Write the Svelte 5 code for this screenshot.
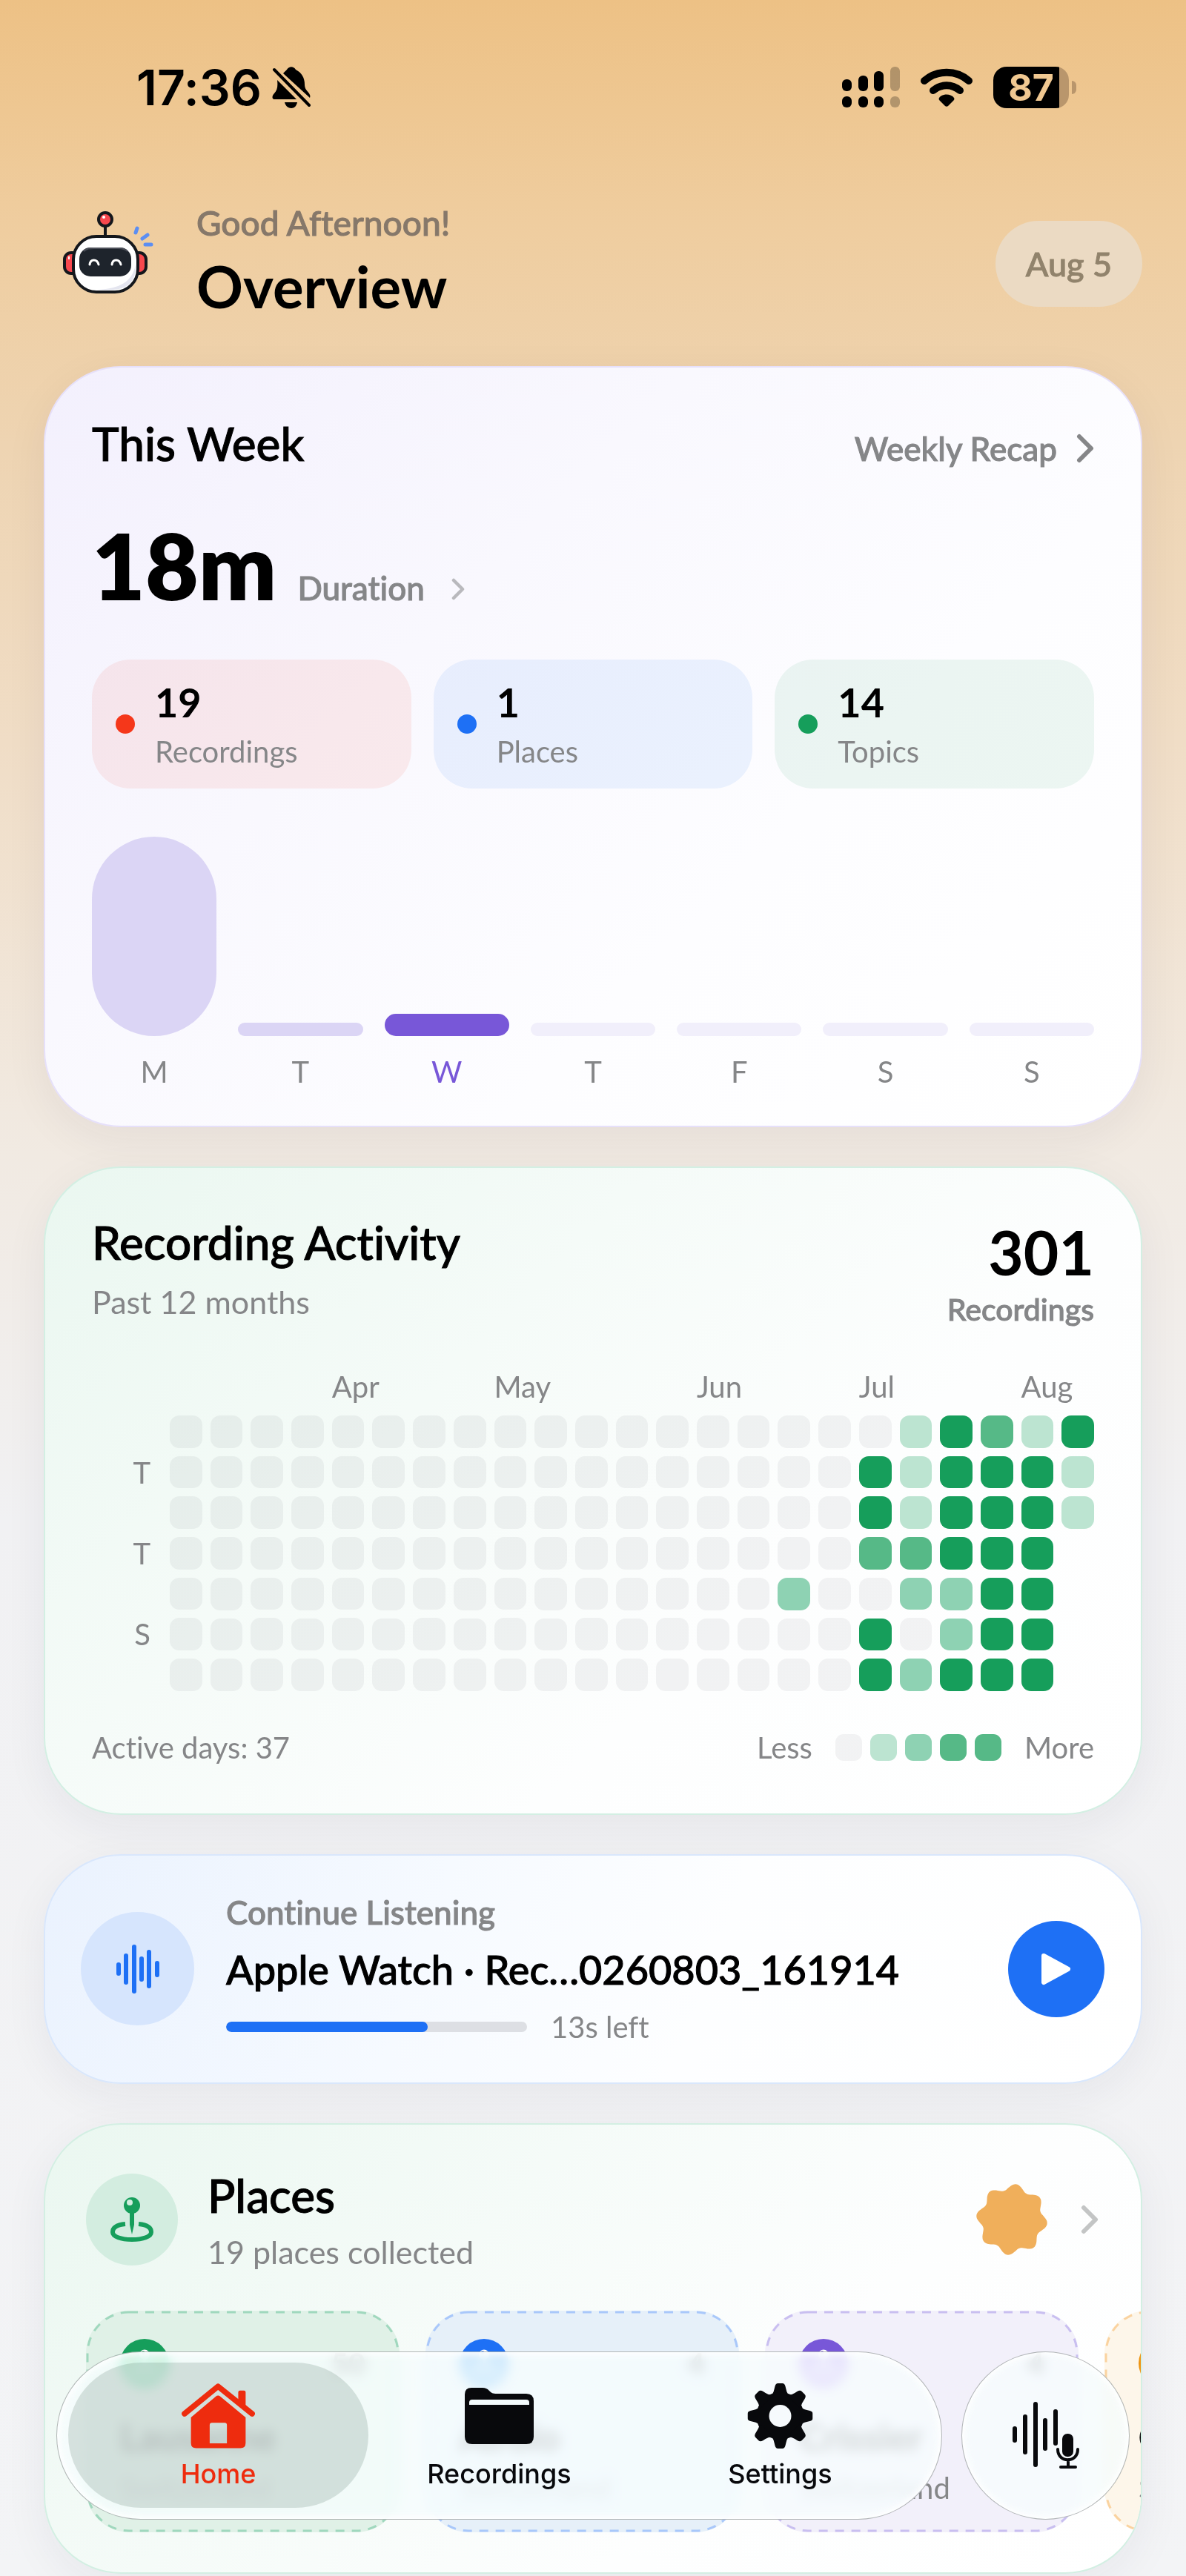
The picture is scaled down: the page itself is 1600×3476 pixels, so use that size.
<script>
  const stats = [
    { value: '19', label: 'Recordings', tone: 'red' },
    { value: '1', label: 'Places', tone: 'blue' },
    { value: '14', label: 'Topics', tone: 'green' },
  ];

  const week = [
    { day: 'M', height: 269, kind: 'past' },
    { day: 'T', height: 18, kind: 'past' },
    { day: 'W', height: 30, kind: 'today' },
    { day: 'T', height: 18, kind: 'empty' },
    { day: 'F', height: 18, kind: 'empty' },
    { day: 'S', height: 18, kind: 'empty' },
    { day: 'S', height: 18, kind: 'empty' },
  ];

  // One string per week column, one digit per day; a dot is a day still to come.
  const quiet = '0000000';
  const weeks = [
    ...Array(15).fill(quiet),
    '0000200',
    quiet,
    '0443044',
    '1113202',
    '4444224',
    '3444444',
    '1444444',
    '411....',
  ];

  const months = [
    { name: 'Apr', column: 5 },
    { name: 'May', column: 9 },
    { name: 'Jun', column: 14 },
    { name: 'Jul', column: 18 },
    { name: 'Aug', column: 22 },
  ];
  const weekdays = ['', 'T', '', 'T', '', 'S', ''];

  const places = [
    { name: 'Lausanne', country: 'Switzerland', count: '50', tone: 'green' },
    { name: 'Airolo', country: 'Switzerland', count: '4', tone: 'blue' },
    { name: 'Crissier', country: 'Switzerland', count: '4', tone: 'purple' },
    { name: 'Como', country: 'Switzerland', count: '2', tone: 'orange' },
  ];

  const teeth = [0, 45, 90, 135, 180, 225, 270, 315];

  const badge =
    'M' +
    Array.from({ length: 180 }, (_, i) => {
      const a = (i * Math.PI) / 90;
      const r = 44 + 4 * Math.cos(8 * (a - 0.12));
      return `${(49 + r * Math.sin(a)).toFixed(1)} ${(49 - r * Math.cos(a)).toFixed(1)}`;
    }).join('L') +
    'Z';
</script>

{#snippet pin()}
  <svg class="pin" viewBox="0 0 58 62" aria-hidden="true">
    <path d="M20 37C9 38 3 42 3 48c0 6 11 10 26 10s26-4 26-10c0-6-6-10-17-11" fill="none" stroke="currentColor" stroke-width="6" />
    <path d="M26 18h6v20l-3 13-3-13z" fill="currentColor" />
    <circle cx="29" cy="12" r="11" fill="currentColor" />
    <circle class="pin-shine" cx="26" cy="8" r="4" />
  </svg>
{/snippet}

{#snippet chevron(size)}
  <svg class="chevron {size}" viewBox="0 0 24 40" aria-hidden="true">
    <path d="M4 4l16 16L4 36" fill="none" stroke="currentColor" stroke-width="6" stroke-linecap="round" stroke-linejoin="round" />
  </svg>
{/snippet}

<div class="screen">
  <div class="status">
    <div class="clock">
      <span>17:36</span>
      <svg class="bell" viewBox="0 0 52 56" aria-hidden="true">
        <path d="M7 18L33 44H4c-5 0-4-5-1-8 4-4 5-9 4-18z" />
        <path d="M15 9C18 6 19 5 20 4c3-5 9-5 12 0 8 4 12 11 12 20 0 6 3 8 6 12 1 2 2 3 1 6z" />
        <path d="M17 48h17c-1 5-4 8-8 8s-8-3-9-8z" />
        <path d="M3 4l47 48" stroke="#000" stroke-width="4" stroke-linecap="round" />
      </svg>
    </div>
    <div class="radios">
      <svg class="signal" viewBox="0 0 78 56" aria-hidden="true">
        <rect x="0" y="17" width="13" height="16" rx="6" /><rect x="22" y="12" width="13" height="21" rx="6" />
        <rect x="43" y="6" width="13" height="27" rx="6" /><rect class="dim" x="65" y="0" width="13" height="33" rx="6" />
        <rect x="0" y="40" width="13" height="15" rx="6" /><rect x="22" y="40" width="13" height="15" rx="6" />
        <rect x="43" y="40" width="13" height="15" rx="6" /><rect class="dim" x="65" y="40" width="13" height="15" rx="6" />
      </svg>
      <svg class="wifi" viewBox="0 0 70 52" aria-hidden="true">
        <path d="M5 17C22 2 48 2 65 17M17 30c11-9 25-9 36 0" fill="none" stroke="#000" stroke-width="10" stroke-linecap="round" />
        <path d="M25 40c4-6 16-6 20 0 1 2 0 3-1 4l-7 7c-1 1-3 1-4 0l-7-7c-1-1-2-2-1-4z" />
      </svg>
      <div class="battery"><span>87</span></div>
      <i class="battery-tip"></i>
    </div>
  </div>

  <header>
    <svg class="robot" viewBox="15 12 152 150" aria-hidden="true">
      <g stroke="#14171c" stroke-width="4">
        <rect x="17" y="72" width="20" height="28" rx="9" fill="#f8484e" />
        <rect x="107" y="72" width="20" height="28" rx="9" fill="#f8484e" />
        <path d="M72 36v16" />
        <circle cx="72" cy="27" r="9" fill="#f8484e" />
        <rect x="29" y="50" width="87" height="75" rx="31" fill="#fff" />
      </g>
      <path d="M113 88c1 24-12 34-34 34H62c30-2 46-10 51-34z" fill="#e4e5ef" />
      <rect x="37" y="65" width="70" height="39" rx="15" fill="#1e242c" />
      <path d="M43 70c4-4 8-4 14-4h32c6 0 10 1 13 4" fill="none" stroke="#4b4e58" stroke-width="2" />
      <path d="M51 88c1-8 10-8 12 0M81 88c1-8 10-8 12 0" fill="none" stroke="#fff" stroke-width="3" stroke-linecap="round" />
      <circle cx="70" cy="24" r="2" fill="#fff" /><path d="M23 77v4" stroke="#fff" stroke-width="2" />
      <path d="M115 39l-2 6M129 48l-7 5M134 61h-8" stroke="#5c8ef2" stroke-width="5" stroke-linecap="round" />
    </svg>
    <div class="greeting">
      <p>Good Afternoon!</p>
      <h1>Overview</h1>
    </div>
    <button class="date">Aug 5</button>
  </header>

  <main>
    <section class="card week">
      <div class="split">
        <h2>This Week</h2>
        <a class="recap" href="#recap">Weekly Recap {@render chevron('large')}</a>
      </div>
      <a class="duration" href="#duration"><strong>18m</strong><span>Duration</span>{@render chevron('small')}</a>
      <div class="stats">
        {#each stats as s}
          <div class="stat {s.tone}">
            <i></i>
            <div><b>{s.value}</b><span>{s.label}</span></div>
          </div>
        {/each}
      </div>
      <div class="bars">
        {#each week as d}
          <div class="day {d.kind}">
            <div class="track"><div class="bar" style:height="{d.height}px"></div></div>
            <span>{d.day}</span>
          </div>
        {/each}
      </div>
    </section>

    <section class="card activity">
      <div class="split top">
        <div>
          <h2>Recording Activity</h2>
          <p class="sub">Past 12 months</p>
        </div>
        <div class="total"><strong>301</strong><span>Recordings</span></div>
      </div>
      <div class="heat">
        <div class="months">
          {#each months as m}<span style:grid-column="{m.column} / span 2">{m.name}</span>{/each}
        </div>
        <div class="weekdays">
          {#each weekdays as w}<span>{w}</span>{/each}
        </div>
        <div class="cells">
          {#each weeks as w}
            <div class="column">
              {#each w as level}<i class={level === '.' ? 'none' : 'l' + level}></i>{/each}
            </div>
          {/each}
        </div>
      </div>
      <div class="split foot">
        <span>Active days: 37</span>
        <div class="legend">
          <span>Less</span>
          <div><i class="l0"></i><i class="l1"></i><i class="l2"></i><i class="l3"></i><i class="l3"></i></div>
          <span>More</span>
        </div>
      </div>
    </section>

    <section class="card listen">
      <div class="disc">
        <svg viewBox="0 0 60 66" aria-hidden="true">
          <path d="M4 27v12M14 15v36M25 3v60M35 19v28M45 10v46M56 25v16" stroke="currentColor" stroke-width="6" stroke-linecap="round" />
        </svg>
      </div>
      <div class="track-info">
        <p class="medium">Continue Listening</p>
        <h3>Apple Watch · Rec…0260803_161914</h3>
        <div class="progress-row">
          <div class="progress"><div class="fill" style:width="67%"></div></div>
          <span>13s left</span>
        </div>
      </div>
      <button class="play" aria-label="Play">
        <svg viewBox="0 0 40 44" aria-hidden="true"><path d="M3 4l33 18L3 40z" fill="#fff" stroke="#fff" stroke-width="6" stroke-linejoin="round" /></svg>
      </button>
    </section>

    <section class="card places">
      <a class="places-head" href="#places">
        <div class="disc">{@render pin()}</div>
        <div class="places-title">
          <h2>Places</h2>
          <p class="sub">19 places collected</p>
        </div>
        <svg class="badge" viewBox="0 0 98 98" aria-hidden="true"><path d={badge} fill="#f0af5b" /></svg>
        {@render chevron('large')}
      </a>
      <div class="tiles">
        {#each places as p}
          <article class="tile {p.tone}">
            <svg class="dashes" aria-hidden="true"><rect x="2" y="2" rx="56" /></svg>
            <div class="tile-top">
              <div class="dot">{@render pin()}</div>
              <b>{p.count}</b>
            </div>
            <h3>{p.name}</h3>
            <p>{p.country}</p>
          </article>
        {/each}
      </div>
    </section>
  </main>

  <div class="dock">
    <nav class="glass">
      <a class="active" href="#home">
        <svg viewBox="490 352 298 264" aria-hidden="true">
          <path d="M502 475L638 364L776 475" fill="none" stroke="currentColor" stroke-width="23" stroke-linecap="round" stroke-linejoin="round" />
          <path d="M720 430v-42q0-7 7-7h16q7 0 7 7v67z" fill="currentColor" />
          <path fill-rule="evenodd" d="M528 490L628 406q10-9 20 0L750 490V594q0 21-21 21H549q-21 0-21-21zM604 595h70v-74q0-9-9-9h-52q-9 0-9 9z" fill="currentColor" />
        </svg>
        <span>Home</span>
      </a>
      <a href="#recordings">
        <svg viewBox="0 -6 93 88" aria-hidden="true">
          <path fill-rule="evenodd" d="M0 9Q0 0 9 0h15c4 0 6 1 9 4 3 3 5 4 9 4h41q10 0 10 10v48q0 10-10 10H10Q0 76 0 66zM6 23h81v-3q0-4-4-4H10q-4 0-4 4z" fill="currentColor" />
        </svg>
        <span>Recordings</span>
      </a>
      <a href="#settings">
        <svg viewBox="0 0 88 88" aria-hidden="true">
          <defs>
            <mask id="gear-hole"><rect width="88" height="88" fill="#fff" /><circle cx="44" cy="44" r="15" fill="#000" /></mask>
          </defs>
          <g mask="url(#gear-hole)" fill="currentColor">
            <circle cx="44" cy="44" r="32" />
            {#each teeth as t}<path transform="rotate({t} 44 44)" d="M30 18q5-4 6-10l1-4q1-4 4-4h6q3 0 4 4l1 4q1 6 6 10z" />{/each}
          </g>
        </svg>
        <span>Settings</span>
      </a>
    </nav>
    <button class="glass record" aria-label="Record">
      <svg viewBox="0 0 92 92" aria-hidden="true">
        <g fill="none" stroke="#08090c" stroke-width="6" stroke-linecap="round">
          <path d="M4 36v16M18 20v48M32 3v82M45 25v38M59 13v43" />
          <path d="M62 64c0 19 27 19 27 0M76 78v9M66 88h20" stroke-width="4" />
        </g>
        <rect x="68" y="43" width="15" height="31" rx="7" fill="#08090c" />
      </svg>
    </button>
  </div>
</div>

<style>
  :global(body) {
    background: #f2f3f5;
  }
  .screen {
    --gray: #858688;
    --red: #f5371a;
    --blue: #1e70f5;
    --green: #169e5b;
    --purple: #7857d8;
    position: relative;
    box-sizing: border-box;
    min-height: 100vh;
    padding-bottom: 3px;
    overflow: hidden;
    font-family: Lato, 'Noto Sans', sans-serif;
    font-size: 40px;
    line-height: 48px;
    font-variant-ligatures: none;
    color: #000;
    background: linear-gradient(#edc185 0, #efcd9f 300px, #eed4b2 600px, #f0ddc6 1000px, #f1e9e0 1500px, #f1f1f3 2050px, #f3f4f6 100%);
  }
  h1, h2, h3, p { margin: 0; font-weight: 500; }
  h2, h3, .medium, .recap, .total span, .date, .greeting p, .duration span { -webkit-text-stroke: 1px currentColor; }
  a { color: inherit; text-decoration: none; }
  button { border: 0; padding: 0; font: inherit; cursor: pointer; }
  svg { display: block; flex: none; }

  .status {
    display: flex;
    justify-content: space-between;
    align-items: center;
    height: 60px;
    padding: 88px 148px 0 184px;
    font-family: Inter, sans-serif;
  }
  .clock, .radios { display: flex; align-items: center; }
  .clock { gap: 14px; font-size: 66px; font-weight: 600; line-height: 60px; }
  .bell { width: 52px; height: 56px; }
  .signal { width: 78px; height: 56px; margin-right: 28px; }
  .dim { opacity: 0.25; }
  .wifi { width: 70px; height: 52px; margin-right: 28px; }
  .battery {
    width: 102px;
    height: 56px;
    border-radius: 18px;
    background: linear-gradient(90deg, #000 89px, #b9966c 89px);
    color: #f0c891;
    font-size: 50px;
    font-weight: 700;
    line-height: 56px;
    text-align: center;
  }
  .battery-tip { width: 6px; height: 18px; margin-left: 4px; border-radius: 0 6px 6px 0; background: #b9966c; }

  header { display: flex; align-items: center; padding: 128px 59px 58px 85px; }
  .robot { width: 152px; height: 150px; }
  .greeting { display: flex; flex-direction: column; gap: 10px; flex: 1; margin-left: 28px; }
  .greeting p { font-size: 46px; line-height: 50px; color: #86786a; }
  h1 { font-size: 78px; line-height: 100px; font-weight: 700; }
  .date {
    height: 116px;
    padding: 0 41px;
    border-radius: 58px;
    background: #ebdac3;
    color: #91836c;
    font-size: 45px;
    font-weight: 500;
  }

  main { display: flex; flex-direction: column; gap: 53px; padding: 0 59px; }
  .card {
    box-sizing: border-box;
    border: 2px solid #d3efe3;
    border-radius: 104px;
    background: linear-gradient(135deg, #eaf7f0, #f5fbf8 35%, #fdfefe 65%, #fff);
    box-shadow: 0 16px 60px rgba(40, 40, 60, 0.06);
  }
  h2 { font-size: 62px; line-height: 70px; }
  .sub { font-size: 43px; line-height: 50px; font-weight: 400; color: var(--gray); }
  .split { display: flex; justify-content: space-between; align-items: baseline; }
  .chevron.large { width: 24px; height: 40px; }
  .chevron.small { width: 18px; height: 30px; }

  .week {
    padding: 67px 63px 49px;
    border-color: #e6e0fa;
    background: linear-gradient(135deg, #f3f0fd, #f9f8fe 35%, #fdfdff 65%, #fff);
  }
  .recap, .duration { display: flex; color: var(--gray); font-size: 44px; font-weight: 500; }
  .recap { align-items: center; gap: 26px; }
  .duration { align-items: baseline; margin-top: 57px; }
  .duration strong { color: #000; font-size: 124px; line-height: 144px; font-weight: 800; }
  .duration span { margin: 0 36px 0 28px; }
  .duration .chevron { opacity: 0.55; }
  .stats { display: grid; grid-template-columns: repeat(3, 1fr); gap: 30px; margin-top: 56px; }
  .stat { display: flex; align-items: center; gap: 27px; height: 174px; padding-left: 32px; border-radius: 52px; }
  .stat i { width: 26px; height: 26px; border-radius: 50%; }
  .stat div { display: flex; flex-direction: column; gap: 10px; }
  .stat b { font-size: 54px; line-height: 64px; font-weight: 700; }
  .stat span { color: var(--gray); }
  .stat.red { background: rgba(245, 55, 26, 0.08); }
  .stat.red i { background: var(--red); }
  .stat.blue { background: rgba(30, 112, 245, 0.08); }
  .stat.blue i { background: var(--blue); }
  .stat.green { background: rgba(22, 158, 91, 0.08); }
  .stat.green i { background: var(--green); }

  .bars { display: grid; grid-template-columns: repeat(7, 1fr); gap: 29px; margin-top: 65px; text-align: center; color: var(--gray); }
  .track { display: flex; align-items: flex-end; height: 269px; margin-bottom: 24px; }
  .bar { width: 100%; border-radius: 84px; background: #f1effb; }
  .past .bar { background: #dbd5f5; }
  .today .bar { background: var(--purple); }
  .today span { color: var(--purple); }

  .activity { padding: 65px 63px; }
  .top { align-items: flex-start; }
  .top .sub { margin-top: 21px; }
  .total { display: flex; flex-direction: column; gap: 6px; align-items: flex-end; }
  .total strong { font-size: 82px; line-height: 96px; font-weight: 700; }
  .total span { color: var(--gray); font-size: 41px; font-weight: 500; }
  .heat { display: grid; grid-template-columns: 79px 1fr; column-gap: 26px; row-gap: 15px; margin-top: 56px; color: var(--gray); }
  .months { grid-column: 2; display: grid; grid-template-columns: repeat(23, minmax(0, 1fr)); column-gap: 11px; }
  .weekdays { display: grid; grid-template-rows: repeat(7, 1fr); gap: 11px; align-items: center; text-align: right; line-height: 40px; }
  .cells { display: grid; grid-template-columns: repeat(23, minmax(0, 1fr)); gap: 11px; }
  .column { display: flex; flex-direction: column; gap: 11px; }
  .column i { aspect-ratio: 1; border-radius: 13px; }
  .l0 { background: rgba(20, 20, 40, 0.05); }
  .l1 { background: #bce4d1; }
  .l2 { background: #8ed2b3; }
  .l3 { background: #56b987; }
  .l4 { background: var(--green); }
  .foot { margin-top: 52px; color: var(--gray); }
  .legend { display: flex; align-items: center; gap: 31px; }
  .legend div { display: flex; gap: 11px; }
  .legend i { width: 36px; height: 36px; border-radius: 11px; }

  .listen {
    display: flex;
    align-items: center;
    padding: 51px 49px 51px 48px;
    border-color: #d9e7fc;
    background: linear-gradient(110deg, #eaf2fe, #f6faff 35%, #fdfeff 60%, #fff);
  }
  .disc { display: flex; align-items: center; justify-content: center; flex: none; border-radius: 50%; }
  .listen .disc { width: 153px; height: 153px; background: #d6e5fd; color: var(--blue); }
  .listen .disc svg { width: 60px; height: 66px; }
  .track-info { display: flex; flex-direction: column; gap: 20px; flex: 1; min-width: 0; margin-left: 43px; }
  .medium { font-size: 44px; line-height: 50px; color: var(--gray); }
  .track-info h3 { font-size: 54px; line-height: 66px; white-space: nowrap; }
  .progress-row { display: flex; align-items: center; gap: 32px; color: var(--gray); }
  .progress { width: 406px; height: 14px; border-radius: 7px; background: #dddfe4; overflow: hidden; }
  .fill { height: 100%; border-radius: 7px; background: var(--blue); }
  .play { display: flex; align-items: center; justify-content: center; width: 130px; height: 130px; border-radius: 50%; background: var(--blue); }
  .play svg { width: 40px; height: 44px; }

  .places { padding: 60px 0 54px; overflow: hidden; }
  .places-head { display: flex; align-items: center; padding: 0 57px 0 55px; }
  .places .disc { width: 124px; height: 124px; background: #d3ede0; color: var(--green); }
  .pin { width: 58px; height: 62px; }
  .pin-shine { fill: #d3ede0; }
  .places-title { display: flex; flex-direction: column; gap: 17px; flex: 1; margin-left: 40px; }
  .badge { width: 98px; height: 98px; margin-right: 44px; }
  .places-head .chevron { color: #c3c5c5; }
  .tiles { display: flex; gap: 35px; margin-top: 54px; padding-left: 55px; }
  .tile { position: relative; box-sizing: border-box; flex: 0 0 423px; height: 299px; padding: 38px 46px 0; border-radius: 58px; }
  .dashes { position: absolute; inset: 0; width: 100%; height: 100%; }
  .dashes rect { width: calc(100% - 4px); height: calc(100% - 4px); fill: none; stroke: currentColor; stroke-width: 3; stroke-dasharray: 12 10; }
  .tile-top { display: flex; align-items: center; justify-content: space-between; height: 66px; margin-bottom: 33px; }
  .tile-top b { font-size: 40px; }
  .dot { display: flex; align-items: center; justify-content: center; width: 66px; height: 66px; border-radius: 50%; color: #fff; }
  .dot .pin { width: 36px; height: 40px; }
  .tile h3 { font-size: 50px; line-height: 66px; font-weight: 700; }
  .tile p { margin-top: 12px; font-weight: 400; color: var(--gray); }
  .tile.green { background: #e0f1e7; }
  .tile.green .dashes { color: #a0d8be; }
  .tile.green .dot { background: var(--green); }
  .tile.blue { background: #e6f0f9; }
  .tile.blue .dashes { color: #a9c8fa; }
  .tile.blue .dot { background: var(--blue); }
  .tile.purple { background: #f2f0fa; }
  .tile.purple .dashes { color: #c9bff0; }
  .tile.purple .dot { background: var(--purple); }
  .tile.orange { background: #fdf6ea; }
  .tile.orange .dashes { color: #fad3a0; }
  .tile.orange .dot { background: #ee930f; }
  .tile.green .pin-shine { fill: var(--green); }
  .tile.blue .pin-shine { fill: var(--blue); }
  .tile.purple .pin-shine { fill: var(--purple); }
  .tile.orange .pin-shine { fill: #ee930f; }

  .dock {
    position: absolute;
    right: 76px;
    bottom: 76px;
    left: 76px;
    display: flex;
    gap: 26px;
    font-family: Inter, sans-serif;
    font-size: 36px;
    line-height: 40px;
    font-weight: 500;
    color: #08090c;
  }
  .glass {
    box-sizing: border-box;
    height: 227px;
    border: 1px solid rgba(0, 0, 0, 0.28);
    border-radius: 114px;
    background: rgba(246, 252, 253, 0.87);
    backdrop-filter: blur(8px) saturate(2);
    box-shadow: inset 0 0 10px 3px #fff;
  }
  nav { display: grid; grid-template-columns: repeat(3, 379px); flex: 1; justify-content: center; padding: 14px; }
  nav a { display: flex; flex-direction: column; align-items: center; justify-content: flex-end; gap: 14px; height: 170px; padding-bottom: 26px; border-radius: 98px; }
  nav a svg { width: 99px; height: 88px; }
  nav .active { width: 405px; justify-self: center; color: #ee2c0e; background: rgba(0, 50, 25, 0.13); }
  .record { display: flex; align-items: center; justify-content: center; width: 227px; }
  .record svg { width: 92px; height: 92px; }
</style>
